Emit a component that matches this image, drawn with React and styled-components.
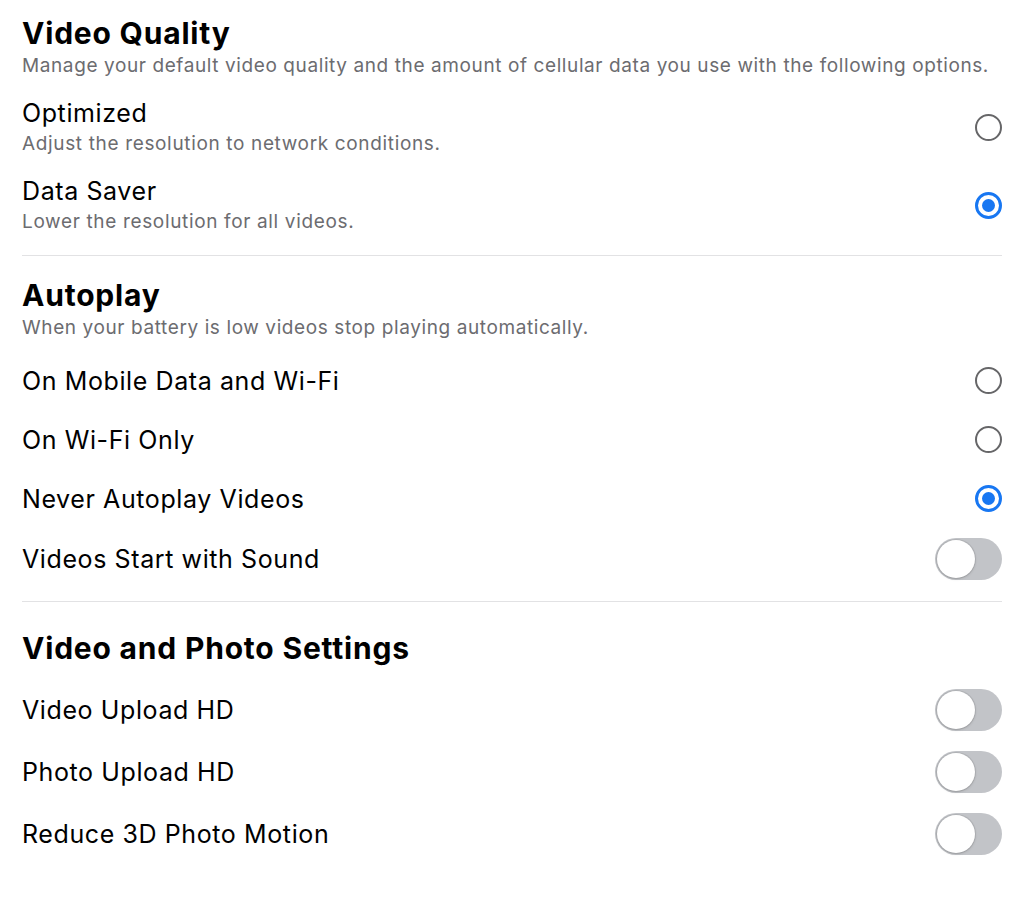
import React from 'react'
import styled, { createGlobalStyle } from 'styled-components'

const GlobalStyle = createGlobalStyle`
  body {
    margin: 0;
    background: #ffffff;
    font-family: Inter, "Noto Sans", sans-serif;
    color: #000;
  }
`

const Page = styled.div`
  padding: 0 22px 0 22px;
  display: flex;
  flex-direction: column;
`

const Section = styled.section`
  display: flex;
  flex-direction: column;
  padding-top: ${p => p.$top || 16}px;
  padding-bottom: 11px;
  & + & {
    border-top: 1px solid #e2e2e4;
  }
`

const Title = styled.h2`
  margin: 0;
  font-size: 30px;
  line-height: 34px;
  font-weight: 700;
  letter-spacing: 0.8px;
`

const Subtitle = styled.p`
  margin: 4px 0 0;
  font-size: 19px;
  line-height: 24px;
  letter-spacing: 0.6px;
  color: #6c6c70;
`

const Rows = styled.div`
  display: flex;
  flex-direction: column;
  margin-top: ${p => p.$gap || 10}px;
`

const Row = styled.div`
  display: flex;
  align-items: center;
  justify-content: space-between;
  min-height: 59px;
  padding: 10px 0;
  box-sizing: border-box;
`

const Text = styled.div`
  display: flex;
  flex-direction: column;
  gap: 4px;
`

const Label = styled.span`
  font-size: 25px;
  line-height: 30px;
  font-weight: 400;
  letter-spacing: 0.6px;
`

const Desc = styled.span`
  font-size: 19px;
  line-height: 24px;
  letter-spacing: 0.65px;
  color: #6c6c70;
`

const Radio = styled.span`
  width: 27px;
  height: 27px;
  box-sizing: border-box;
  border-radius: 50%;
  border: ${p => (p.$on ? '3px solid #1877f2' : '2.5px solid #666668')};
  display: flex;
  align-items: center;
  justify-content: center;
  &::after {
    content: '';
    display: ${p => (p.$on ? 'block' : 'none')};
    width: 13px;
    height: 13px;
    border-radius: 50%;
    background: #1877f2;
  }
`

const Switch = styled.span`
  width: 67px;
  height: 42px;
  box-sizing: border-box;
  border-radius: 21px;
  background: #c2c4c8;
  padding: 2px;
  display: flex;
  align-items: center;
  &::before {
    content: '';
    width: 38px;
    height: 38px;
    border-radius: 50%;
    background: #fff;
    box-shadow: 0 0 0 1px rgba(0, 0, 0, 0.08), 0 1px 3px rgba(0, 0, 0, 0.15);
  }
`

const RadioRow = ({ label, desc, on }) => (
  <Row>
    <Text>
      <Label>{label}</Label>
      {desc && <Desc>{desc}</Desc>}
    </Text>
    <Radio $on={on} />
  </Row>
)

const SwitchRow = ({ label }) => (
  <Row>
    <Label>{label}</Label>
    <Switch />
  </Row>
)

export default function App() {
  return (
    <>
      <GlobalStyle />
      <Page>
        <Section>
          <Title>Video Quality</Title>
          <Subtitle>
            Manage your default video quality and the amount of cellular data you use with the following options.
          </Subtitle>
          <Rows>
            <RadioRow label="Optimized" desc="Adjust the resolution to network conditions." />
            <RadioRow label="Data Saver" desc="Lower the resolution for all videos." on />
          </Rows>
        </Section>
        <Section $top={22}>
          <Title>Autoplay</Title>
          <Subtitle>When your battery is low videos stop playing automatically.</Subtitle>
          <Rows $gap={11}>
            <RadioRow label="On Mobile Data and Wi-Fi" />
            <RadioRow label="On Wi-Fi Only" />
            <RadioRow label="Never Autoplay Videos" on />
            <SwitchRow label="Videos Start with Sound" />
          </Rows>
        </Section>
        <Section $top={29}>
          <Title>Video and Photo Settings</Title>
          <Rows $gap={14}>
            <SwitchRow label="Video Upload HD" />
            <SwitchRow label="Photo Upload HD" />
            <SwitchRow label="Reduce 3D Photo Motion" />
          </Rows>
        </Section>
      </Page>
    </>
  )
}
